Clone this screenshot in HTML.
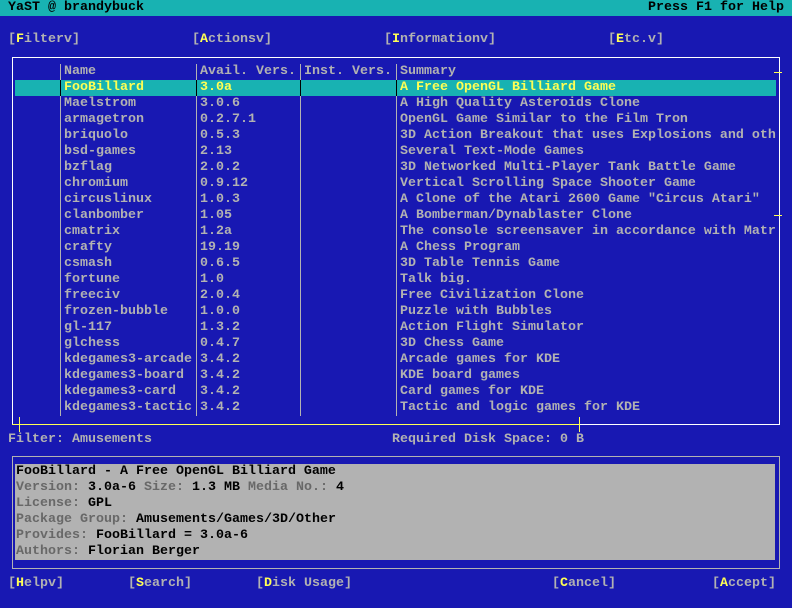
<!DOCTYPE html>
<html><head><meta charset="utf-8"><style>
body{margin:0;width:792px;height:608px;background:#1818b2;overflow:hidden;position:relative;font-family:"Liberation Mono",monospace;font-weight:bold;font-size:13.33px;color:#b2b2b2}
.r{position:absolute;height:16px;line-height:16px;white-space:pre}
.y{color:#ffff54}
.k{color:#000}
.d{color:#686868}
.l{position:absolute}
</style></head><body>
<div class="l" style="left:0;top:0;width:792px;height:16px;background:#18b2b2"></div>
<div class="r k" style="left:8px;top:0">YaST @ brandybuck</div>
<div class="r k" style="left:648px;top:0">Press F1 for Help</div>

<div class="r" style="left:8px;top:32px">[<span class="y">F</span>ilterv]</div>
<div class="r" style="left:192px;top:32px">[<span class="y">A</span>ctionsv]</div>
<div class="r" style="left:384px;top:32px">[<span class="y">I</span>nformationv]</div>
<div class="r" style="left:608px;top:32px">[<span class="y">E</span>tc.v]</div>

<!-- table frame -->
<div class="l" style="left:12px;top:57px;width:768px;height:1px;background:#fff"></div>
<div class="l" style="left:12px;top:57px;width:1px;height:368px;background:#fff"></div>
<div class="l" style="left:779px;top:57px;width:1px;height:368px;background:#fff"></div>
<div class="l" style="left:774px;top:72px;width:8px;height:1px;background:#ffff54"></div>
<div class="l" style="left:774px;top:215px;width:8px;height:1px;background:#ffff54"></div>
<div class="l" style="left:12px;top:424px;width:768px;height:1px;background:#fff"></div>
<div class="l" style="left:12px;top:424px;width:568px;height:1px;background:#ffff54"></div>
<div class="l" style="left:19px;top:417px;width:1px;height:15px;background:#ffff54"></div>
<div class="l" style="left:579px;top:417px;width:1px;height:15px;background:#ffff54"></div>

<div class="l" style="left:15px;top:80px;width:761px;height:16px;background:#18b2b2"></div>
<div class="l" style="left:60px;top:64px;width:1px;height:352px;background:#b2b2b2"></div>
<div class="l" style="left:196px;top:64px;width:1px;height:352px;background:#b2b2b2"></div>
<div class="l" style="left:300px;top:64px;width:1px;height:352px;background:#b2b2b2"></div>
<div class="l" style="left:396px;top:64px;width:1px;height:352px;background:#b2b2b2"></div>
<div class="l" style="left:60px;top:80px;width:1px;height:16px;background:#000"></div>
<div class="l" style="left:196px;top:80px;width:1px;height:16px;background:#000"></div>
<div class="l" style="left:300px;top:80px;width:1px;height:16px;background:#000"></div>
<div class="l" style="left:396px;top:80px;width:1px;height:16px;background:#000"></div>

<div class="r" style="left:64px;top:64px">Name</div>
<div class="r" style="left:200px;top:64px">Avail. Vers.</div>
<div class="r" style="left:304px;top:64px">Inst. Vers.</div>
<div class="r" style="left:400px;top:64px">Summary</div>

<div class="r y" style="left:64px;top:80px">FooBillard</div><div class="r y" style="left:200px;top:80px">3.0a</div><div class="r y" style="left:400px;top:80px">A Free OpenGL Billiard Game</div>
<div class="r" style="left:64px;top:96px">Maelstrom</div><div class="r" style="left:200px;top:96px">3.0.6</div><div class="r" style="left:400px;top:96px">A High Quality Asteroids Clone</div>
<div class="r" style="left:64px;top:112px">armagetron</div><div class="r" style="left:200px;top:112px">0.2.7.1</div><div class="r" style="left:400px;top:112px">OpenGL Game Similar to the Film Tron</div>
<div class="r" style="left:64px;top:128px">briquolo</div><div class="r" style="left:200px;top:128px">0.5.3</div><div class="r" style="left:400px;top:128px">3D Action Breakout that uses Explosions and oth</div>
<div class="r" style="left:64px;top:144px">bsd-games</div><div class="r" style="left:200px;top:144px">2.13</div><div class="r" style="left:400px;top:144px">Several Text-Mode Games</div>
<div class="r" style="left:64px;top:160px">bzflag</div><div class="r" style="left:200px;top:160px">2.0.2</div><div class="r" style="left:400px;top:160px">3D Networked Multi-Player Tank Battle Game</div>
<div class="r" style="left:64px;top:176px">chromium</div><div class="r" style="left:200px;top:176px">0.9.12</div><div class="r" style="left:400px;top:176px">Vertical Scrolling Space Shooter Game</div>
<div class="r" style="left:64px;top:192px">circuslinux</div><div class="r" style="left:200px;top:192px">1.0.3</div><div class="r" style="left:400px;top:192px">A Clone of the Atari 2600 Game "Circus Atari"</div>
<div class="r" style="left:64px;top:208px">clanbomber</div><div class="r" style="left:200px;top:208px">1.05</div><div class="r" style="left:400px;top:208px">A Bomberman/Dynablaster Clone</div>
<div class="r" style="left:64px;top:224px">cmatrix</div><div class="r" style="left:200px;top:224px">1.2a</div><div class="r" style="left:400px;top:224px">The console screensaver in accordance with Matr</div>
<div class="r" style="left:64px;top:240px">crafty</div><div class="r" style="left:200px;top:240px">19.19</div><div class="r" style="left:400px;top:240px">A Chess Program</div>
<div class="r" style="left:64px;top:256px">csmash</div><div class="r" style="left:200px;top:256px">0.6.5</div><div class="r" style="left:400px;top:256px">3D Table Tennis Game</div>
<div class="r" style="left:64px;top:272px">fortune</div><div class="r" style="left:200px;top:272px">1.0</div><div class="r" style="left:400px;top:272px">Talk big.</div>
<div class="r" style="left:64px;top:288px">freeciv</div><div class="r" style="left:200px;top:288px">2.0.4</div><div class="r" style="left:400px;top:288px">Free Civilization Clone</div>
<div class="r" style="left:64px;top:304px">frozen-bubble</div><div class="r" style="left:200px;top:304px">1.0.0</div><div class="r" style="left:400px;top:304px">Puzzle with Bubbles</div>
<div class="r" style="left:64px;top:320px">gl-117</div><div class="r" style="left:200px;top:320px">1.3.2</div><div class="r" style="left:400px;top:320px">Action Flight Simulator</div>
<div class="r" style="left:64px;top:336px">glchess</div><div class="r" style="left:200px;top:336px">0.4.7</div><div class="r" style="left:400px;top:336px">3D Chess Game</div>
<div class="r" style="left:64px;top:352px">kdegames3-arcade</div><div class="r" style="left:200px;top:352px">3.4.2</div><div class="r" style="left:400px;top:352px">Arcade games for KDE</div>
<div class="r" style="left:64px;top:368px">kdegames3-board</div><div class="r" style="left:200px;top:368px">3.4.2</div><div class="r" style="left:400px;top:368px">KDE board games</div>
<div class="r" style="left:64px;top:384px">kdegames3-card</div><div class="r" style="left:200px;top:384px">3.4.2</div><div class="r" style="left:400px;top:384px">Card games for KDE</div>
<div class="r" style="left:64px;top:400px">kdegames3-tactic</div><div class="r" style="left:200px;top:400px">3.4.2</div><div class="r" style="left:400px;top:400px">Tactic and logic games for KDE</div>

<div class="r" style="left:8px;top:432px">Filter: Amusements</div>
<div class="r" style="left:392px;top:432px">Required Disk Space: 0 B</div>

<div class="l" style="left:12px;top:456px;width:766px;height:111px;border:1px solid #b2b2b2"></div>
<div class="l" style="left:15px;top:464px;width:760px;height:96px;background:#b2b2b2"></div>
<div class="r k" style="left:16px;top:464px">FooBillard - A Free OpenGL Billiard Game</div>
<div class="r k" style="left:16px;top:480px"><span class="d">Version:</span> 3.0a-6 <span class="d">Size:</span> 1.3 MB <span class="d">Media No.:</span> 4</div>
<div class="r k" style="left:16px;top:496px"><span class="d">License:</span> GPL</div>
<div class="r k" style="left:16px;top:512px"><span class="d">Package Group:</span> Amusements/Games/3D/Other</div>
<div class="r k" style="left:16px;top:528px"><span class="d">Provides:</span> FooBillard = 3.0a-6</div>
<div class="r k" style="left:16px;top:544px"><span class="d">Authors:</span> Florian Berger</div>

<div class="r" style="left:8px;top:576px">[<span class="y">H</span>elpv]</div>
<div class="r" style="left:128px;top:576px">[<span class="y">S</span>earch]</div>
<div class="r" style="left:256px;top:576px">[<span class="y">D</span>isk Usage]</div>
<div class="r" style="left:552px;top:576px">[<span class="y">C</span>ancel]</div>
<div class="r" style="left:712px;top:576px">[<span class="y">A</span>ccept]</div>
</body></html>
